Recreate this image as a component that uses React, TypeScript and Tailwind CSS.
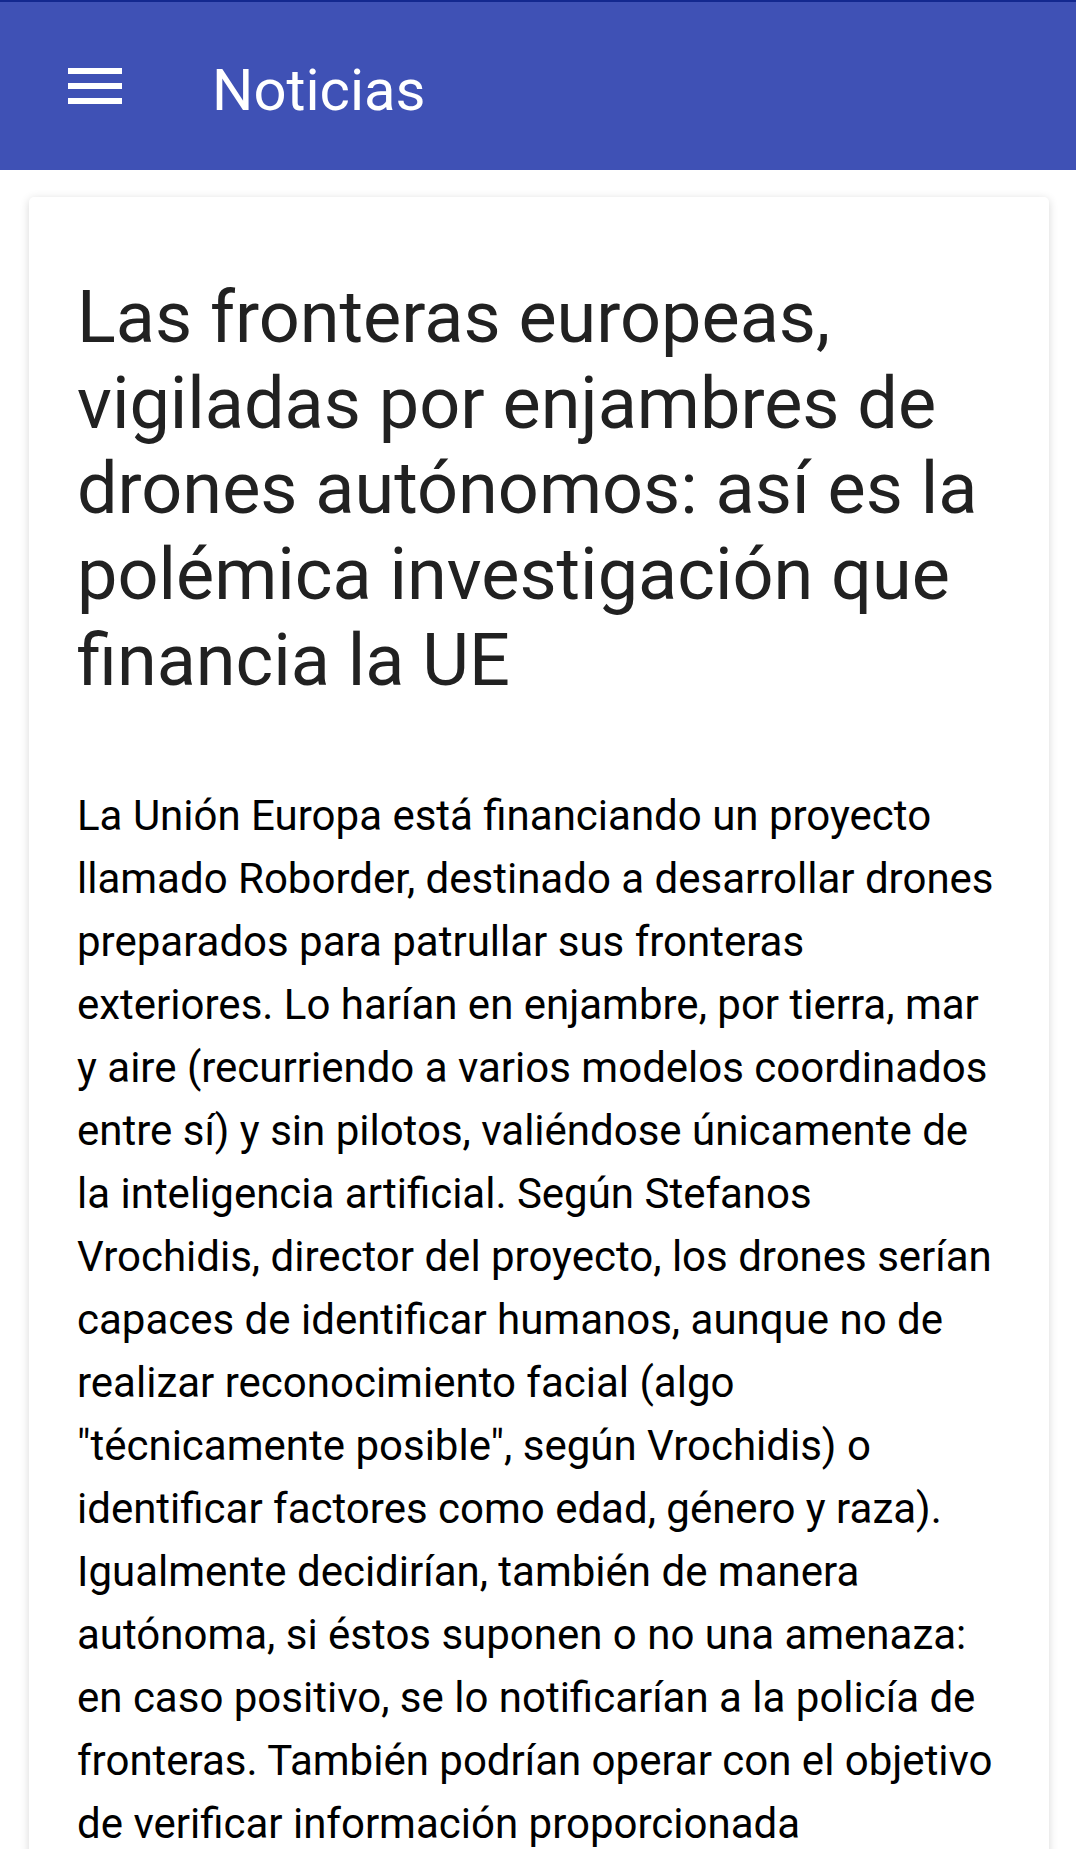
const TITLE =
    'Las fronteras europeas, vigiladas por enjambres de drones autónomos: así es la polémica investigación que financia la UE';

const BODY =
    'La Unión Europa está financiando un proyecto llamado Roborder, destinado a desarrollar drones preparados para patrullar sus fronteras exteriores. Lo harían en enjambre, por tierra, mar y aire (recurriendo a varios modelos coordinados entre sí) y sin pilotos, valiéndose únicamente de la inteligencia artificial. Según Stefanos Vrochidis, director del proyecto, los drones serían capaces de identificar humanos, aunque no de realizar reconocimiento facial (algo "técnicamente posible", según Vrochidis) o identificar factores como edad, género y raza). Igualmente decidirían, también de manera autónoma, si éstos suponen o no una amenaza: en caso positivo, se lo notificarían a la policía de fronteras. También podrían operar con el objetivo de verificar información proporcionada';

function MenuIcon() {
    return (
        <svg width="72" height="72" viewBox="0 0 24 24" fill="white">
            <path d="M3 18h18v-2H3v2zm0-5h18v-2H3v2zm0-7v2h18V6H3z" />
        </svg>
    );
}

export default function App() {
    return (
        <div className="min-h-screen bg-white font-['Roboto','Liberation_Sans',sans-serif]">
            <header className="h-[170px] bg-[#3f51b5] border-t-2 border-[#13288f] flex items-center">
                <div className="ml-[59px]">
                    <MenuIcon />
                </div>
                <h1 className="ml-[81px] pt-[8px] text-[58px] leading-[58px] text-white font-normal">Noticias</h1>
            </header>

            <main className="pt-[27px] pl-[29px] pr-[27px]">
                <article className="bg-white rounded-[5px] shadow-[0_2px_10px_rgba(0,0,0,0.16)] pt-[78px] pl-[48px] pr-[48px] pb-12">
                    <h2 className="text-[72px] leading-[85.7px] text-[#212121] font-normal">{TITLE}</h2>
                    <p className="mt-[80px] text-[42px] leading-[63px] text-black">{BODY}</p>
                </article>
            </main>
        </div>
    );
}
